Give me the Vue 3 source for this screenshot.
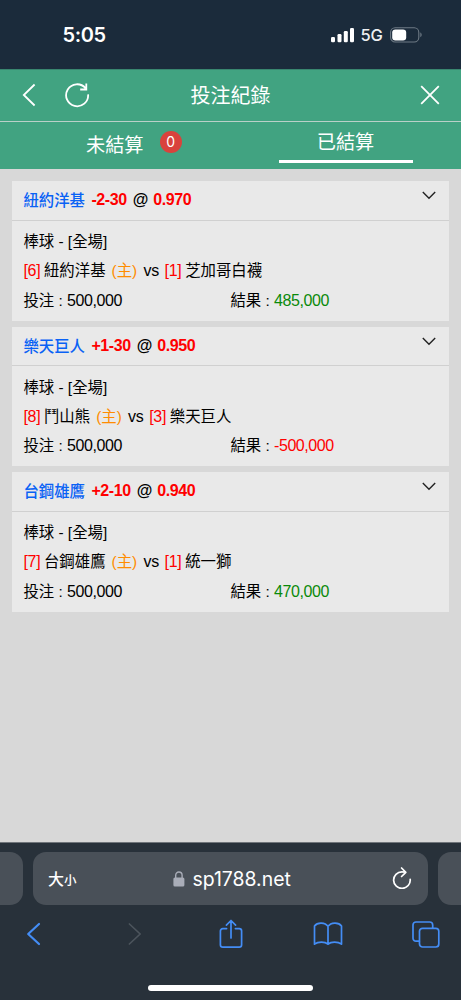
<script setup>
const bets = [
  { pick: '紐約洋基', line: '-2-30', odds: '0.970', homeRank: '[6]', home: '紐約洋基', awayRank: '[1]', away: '芝加哥白襪', result: '485,000', win: true },
  { pick: '樂天巨人', line: '+1-30', odds: '0.950', homeRank: '[8]', home: '鬥山熊', awayRank: '[3]', away: '樂天巨人', result: '-500,000', win: false },
  { pick: '台鋼雄鷹', line: '+2-10', odds: '0.940', homeRank: '[7]', home: '台鋼雄鷹', awayRank: '[1]', away: '統一獅', result: '470,000', win: true },
]
</script>

<template>
  <div class="screen">
    <div class="status">
      <span class="clock">5:05</span>
      <svg class="signal" width="24" height="16" viewBox="0 0 24 16" fill="#fff">
        <rect x="0" y="10" width="4" height="5.3" rx="1.2" />
        <rect x="6.5" y="7" width="4" height="8.3" rx="1.2" />
        <rect x="12.8" y="4" width="4" height="11.3" rx="1.2" />
        <rect x="19" y="1" width="4" height="14.3" rx="1.2" />
      </svg>
      <span class="net">5G</span>
      <svg class="battery" width="33" height="16" viewBox="0 0 33 16">
        <rect x=".6" y=".8" width="28.2" height="14.2" rx="4.6" fill="none" stroke="#6e7a85" stroke-width="1.1" />
        <rect x="2.2" y="2.4" width="14" height="11" rx="3.2" fill="#fff" />
        <path d="M30.3 5.6c1.8.6 1.8 4 0 4.6z" fill="#6e7a85" />
      </svg>
    </div>

    <header class="bar">
      <svg class="back" width="14" height="24" viewBox="0 0 14 24"><path d="M12.6 1.5 1.8 12l10.8 10.5" /></svg>
      <svg class="reload" width="26" height="26" viewBox="0 0 26 26"><path d="M24.1 12.4A11 11 0 1 1 21.5 6.1M22.3 1.6v5.9h-6.1" /></svg>
      <h1 class="title">投注紀錄</h1>
      <svg class="close" width="20" height="20" viewBox="0 0 20 20"><path d="m1.2 1.2 17.6 17.6M18.8 1.2 1.2 18.8" /></svg>
    </header>

    <nav class="tabs">
      <div class="tab pending"><span>未結算</span><b class="badge">0</b></div>
      <div class="tab settled"><span>已結算</span></div>
    </nav>

    <main class="list">
      <section v-for="bet in bets" :key="bet.pick" class="card">
        <div class="head">
          <span class="pick">{{ bet.pick }}</span>
          <span class="line num">{{ bet.line }}</span>
          <span class="at">@</span>
          <span class="odds num">{{ bet.odds }}</span>
          <svg class="chevron" width="14" height="9" viewBox="0 0 14 9"><path d="m.8 1 6.2 6.3L13.2 1" /></svg>
        </div>
        <div class="body">
          <div class="row">棒球 - [全場]</div>
          <div class="row">
            <span class="rank num">{{ bet.homeRank }}</span>
            <span class="team">{{ bet.home }}</span>
            <span class="host">(主)</span>
            <span class="vs num">vs</span>
            <span class="rank num">{{ bet.awayRank }}</span>
            <span class="team">{{ bet.away }}</span>
          </div>
          <div class="row money">
            <span>投注 : <span class="num">500,000</span></span>
            <span>結果 : <em class="num" :class="bet.win ? 'win' : 'loss'">{{ bet.result }}</em></span>
          </div>
        </div>
      </section>
    </main>

    <footer class="browser">
      <div class="address-row">
        <div class="side left"></div>
        <div class="address">
          <span class="size">大<small>小</small></span>
          <div class="site">
            <svg width="12" height="16" viewBox="0 0 12 16"><path d="M2.7 7V4.2a3.2 3.2 0 0 1 6.4 0V7" fill="none" stroke="#a9adb8" stroke-width="1.4" /><rect x=".4" y="6.6" width="11" height="9" rx="1.5" fill="#a9adb8" /></svg>
            <span>sp1788.net</span>
          </div>
          <svg class="refresh" width="20" height="22" viewBox="0 0 20 22"><path d="M18.2 12.4A8.3 8.3 0 1 1 9.9 4.8q2 0 3.6.5M9.6 1l4.2 4.3-4.2 4.2" /></svg>
        </div>
        <div class="side right"></div>
      </div>
      <div class="tools">
        <svg width="16" height="24" viewBox="0 0 16 24"><path d="M13 2 2.2 12 13 22" stroke-width="2.2" /></svg>
        <svg class="off" width="16" height="24" viewBox="0 0 16 24"><path d="m2.4 2 10.8 10L2.4 22" /></svg>
        <svg class="share" width="26" height="30" viewBox="0 0 26 30"><path d="M8.6 9.6H4.8a2.4 2.4 0 0 0-2.4 2.4v13.8a2.4 2.4 0 0 0 2.4 2.4h16.4a2.4 2.4 0 0 0 2.4-2.4V12a2.4 2.4 0 0 0-2.4-2.4h-3.8M13 19V1.8M8.4 6.1 13 1.5l4.6 4.6" /></svg>
        <svg class="book" width="30" height="24" viewBox="0 0 30 24"><path d="M15 4.4C12.2.2 4.4-.1 1.5 4v18.2C5 19.4 12 19.4 15 22.2c3-2.8 10-2.8 13.5 0V4C25.6-.1 17.8.2 15 4.4v17.8" /></svg>
        <svg class="pages" width="28" height="27" viewBox="0 0 28 27"><path d="M7.3 20.2H4a3 3 0 0 1-3-3V4a3 3 0 0 1 3-3h13.7a3 3 0 0 1 3 3v3" /><rect x="7.5" y="7.3" width="19.3" height="18.7" rx="3" /></svg>
      </div>
      <div class="home"></div>
    </footer>
  </div>
</template>

<style>
body { margin: 0; background: #28313a; }
</style>

<style scoped>
.screen {
  width: 461px; height: 1000px; overflow: hidden; display: flex; flex-direction: column;
  background: #d8d8d8; color: #000;
  font-family: "Liberation Sans", "Noto Sans CJK TC", sans-serif;
}
svg { display: block; flex: none; }
.status { height: 69px; flex: none; box-sizing: border-box; background: #1b2b3b; color: #fff; display: flex; align-items: center; padding: 0 38px 0 62.6px; }
.clock { font: 600 20px/24px Inter, sans-serif; letter-spacing: -.4px; width: 268px; }
.net { font: 500 16.5px/20px Inter, sans-serif; color: #eef0f2; margin: 1px 0 0 6px; width: 23.5px; letter-spacing: -.4px; }
.battery { margin-left: auto; }

.bar { height: 52px; flex: none; box-sizing: border-box; background: #41a381; border-top: 1px solid #39866f; display: flex; align-items: center; padding: 0 21px 0 22px; }
.bar path { fill: none; stroke: #fff; stroke-width: 1.8; }
.bar svg { margin-top: -2px; }
.bar .reload { margin-left: 28px; }
.title { margin: 0 0 0 100.5px; flex: 1; color: #fff; font-size: 20px; line-height: 30px; font-weight: 400; }

.tabs { height: 48px; flex: none; box-sizing: border-box; background: #41a381; border-top: 1px solid #b9d0c8; display: grid; grid-template-columns: 1fr 1fr; color: #fff; font-size: 19.2px; font-weight: 400; }
.tab { display: flex; align-items: flex-start; line-height: 28px; }
.pending { padding: 10px 0 0 86px; }
.badge { margin: -1px 0 0 16px; width: 22px; height: 22px; border-radius: 50%; background: #d9423c; font: 400 14px/22px Inter, sans-serif; text-align: center; }
.settled { width: 134px; height: 41px; box-sizing: border-box; border-bottom: 3.4px solid #fff; justify-content: center; padding-top: 7px; margin-left: 48px; }

.list { flex: 1; display: flex; flex-direction: column; gap: 6px; padding: 12px 12px 0; }
.card { background: #e9e9e9; height: 139.5px; font-size: 15.4px; }
.num { font-size: 16px; letter-spacing: -.42px; }
.head { height: 39.5px; box-sizing: border-box; border-bottom: 1.5px solid #d0d0d0; padding: 0 13px 0 11.4px; display: flex; align-items: center; font-weight: 700; }
.pick { color: #0a62f5; width: 68px; font-weight: 500; margin-top: -2px; }
.line, .odds { color: #f00; }
.at { margin: 0 5px 0 6px; font-size: 16px; }
.chevron { margin: -9px 0 0 auto; }
.chevron path { fill: none; stroke: #222; stroke-width: 1.4; }
.body { padding: 6.5px 12px 0 11.4px; }
.row { height: 29.4px; line-height: 29.4px; display: flex; white-space: pre; }
.rank { color: #f00; letter-spacing: -.3px; }
.team { margin-left: 3.7px; }
.host { color: #ff8c00; margin: 0 6.2px 0 6px; }
.vs { margin-right: 5.6px; letter-spacing: -.2px; }
.money { display: grid; grid-template-columns: 207px 1fr; }
em { font-style: normal; }
.win { color: #0a8a0a; }
.loss { color: #f00; }

.browser { height: 158px; flex: none; box-sizing: border-box; background: #28313a; border-top: 1px solid #70757a; padding-top: 9px; }
.address-row { display: grid; grid-template-columns: 23px 395px 23px; gap: 10px; height: 53px; }
.side, .address { background: #495058; border-radius: 13px; }
.left { border-radius: 0 13px 13px 0; }
.right { border-radius: 13px 0 0 13px; }
.address { display: flex; align-items: center; justify-content: space-between; padding: 0 16px 0 15px; color: #fff; }
.size { font-size: 16px; font-weight: 500; width: 125px; margin-top: -2px; }
.size small { font-size: 12.5px; }
.site { display: flex; align-items: center; gap: 7.5px; font: 400 19.4px/28px Inter, sans-serif; flex: 1; }
.refresh { margin-top: -2px; }
.refresh path { fill: none; stroke: #fff; stroke-width: 1.7; stroke-linecap: round; stroke-linejoin: round; }
.tools { height: 58px; padding: 0 21px 0 26px; display: flex; align-items: center; }
.tools svg { fill: none; stroke: #448df5; stroke-width: 1.7; stroke-linejoin: round; stroke-linecap: round; }
.tools .off { stroke: #4c545c; margin-left: 84.5px; }
.tools .share { margin-left: 75px; }
.tools .book { margin-left: 69.5px; }
.tools .pages { margin-left: auto; }
.home { width: 165px; height: 6px; border-radius: 3px; background: #fff; margin: 22px auto 0; }
</style>
